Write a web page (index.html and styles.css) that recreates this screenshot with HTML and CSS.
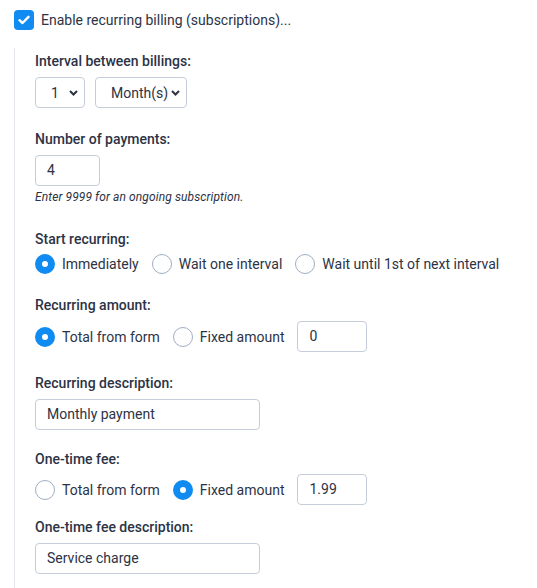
FILE: index.html
```html
<!DOCTYPE html>
<html>
<head>
<meta charset="utf-8">
<link rel="stylesheet" href="styles.css">
</head>
<body>
<div class="page">
  <label class="enable">
    <span class="checkbox"><svg width="12" height="10" viewBox="0 0 12 10"><path d="M1.5 5.2 L4.5 8 L10.5 1.8" fill="none" stroke="#fff" stroke-width="2.4" stroke-linecap="round" stroke-linejoin="round"/></svg></span>
    <span>Enable recurring billing (subscriptions)...</span>
  </label>
  <div class="section">
    <div class="field f-interval">
      <div class="lbl">Interval between billings:</div>
      <div class="row">
        <span class="sel sel-num"><span class="sel-text">1</span><svg class="chev" width="9" height="6" viewBox="0 0 9 6"><path d="M1 1 L4.5 4.5 L8 1" fill="none" stroke="#2c3345" stroke-width="2"/></svg></span>
        <span class="sel sel-unit"><span class="sel-text">Month(s)</span><svg class="chev" width="9" height="6" viewBox="0 0 9 6"><path d="M1 1 L4.5 4.5 L8 1" fill="none" stroke="#2c3345" stroke-width="2"/></svg></span>
      </div>
    </div>
    <div class="field f-payments">
      <div class="lbl">Number of payments:</div>
      <div class="input w-small">4</div>
      <div class="hint">Enter 9999 for an ongoing subscription.</div>
    </div>
    <div class="field f-start">
      <div class="lbl">Start recurring:</div>
      <div class="row radios">
        <span class="radio on"></span><span class="rtext">Immediately</span>
        <span class="radio"></span><span class="rtext">Wait one interval</span>
        <span class="radio"></span><span class="rtext">Wait until 1st of next interval</span>
      </div>
    </div>
    <div class="field f-amount">
      <div class="lbl">Recurring amount:</div>
      <div class="row radios">
        <span class="radio on"></span><span class="rtext">Total from form</span>
        <span class="radio"></span><span class="rtext">Fixed amount</span>
        <span class="input w-amt">0</span>
      </div>
    </div>
    <div class="field f-desc">
      <div class="lbl">Recurring description:</div>
      <div class="input w-wide">Monthly payment</div>
    </div>
    <div class="field f-fee">
      <div class="lbl">One-time fee:</div>
      <div class="row radios">
        <span class="radio"></span><span class="rtext">Total from form</span>
        <span class="radio on"></span><span class="rtext">Fixed amount</span>
        <span class="input w-amt">1.99</span>
      </div>
    </div>
    <div class="field f-feedesc">
      <div class="lbl">One-time fee description:</div>
      <div class="input w-wide">Service charge</div>
    </div>
  </div>
</div>
</body>
</html>
```

FILE: styles.css
```css
html, body {
  margin: 0;
  padding: 0;
  background: #fff;
}
body {
  font-family: Roboto, "Liberation Sans", sans-serif;
  font-size: 14px;
  color: #2c3345;
}
.page {
  padding: 10px 0 0 14px;
}
.enable {
  display: flex;
  align-items: center;
  gap: 7px;
  height: 20px;
  line-height: 20px;
}
.checkbox {
  width: 20px;
  height: 20px;
  border-radius: 4px;
  background: #0f8bf2;
  display: flex;
  align-items: center;
  justify-content: center;
}
.section {
  margin-top: 18px;
  border-left: 1px solid #e3e6ea;
  padding: 4px 0 20px 20px;
}
.lbl {
  font-weight: 500;
  line-height: 18px;
  height: 18px;
  margin-bottom: 7px;
}
.f-payments { margin-top: 22px; }
.f-start { margin-top: 25px; }
.f-start .lbl { margin-bottom: 6px; }
.f-amount { margin-top: 22px; }
.f-desc { margin-top: 22px; }
.f-fee { margin-top: 20px; }
.f-fee .lbl { margin-bottom: 6px; }
.f-feedesc { margin-top: 13px; }
.row {
  display: flex;
  align-items: center;
}
.sel {
  position: relative;
  box-sizing: border-box;
  height: 31px;
  border: 1px solid #c5cdda;
  border-radius: 4px;
  display: flex;
  align-items: center;
  padding-left: 15px;
}
.sel-num { width: 50px; }
.sel-unit { width: 92px; margin-left: 10px; padding-left: 15px; }
.chev {
  position: absolute;
  right: 6px;
  top: 12px;
}
.input {
  box-sizing: border-box;
  height: 31px;
  border: 1px solid #c5cdda;
  border-radius: 4px;
  padding-left: 11px;
  line-height: 29px;
  display: block;
}
.w-small { width: 65px; }
.w-wide { width: 225px; }
.w-amt { width: 70px; }
.hint {
  font-size: 12px;
  font-style: italic;
  line-height: 16px;
  margin-top: 3px;
  letter-spacing: 0.1px;
}
.radios {
  height: 20px;
}
.f-amount .radios, .f-fee .radios { height: 31px; }
.radio {
  box-sizing: border-box;
  width: 20px;
  height: 20px;
  border-radius: 50%;
  border: 1px solid #9eaec2;
  background: #fff;
  flex: none;
}
.radio.on {
  border: 7px solid #0f8bf2;
}
.rtext {
  margin-left: 7px;
  margin-right: 13px;
}
```
